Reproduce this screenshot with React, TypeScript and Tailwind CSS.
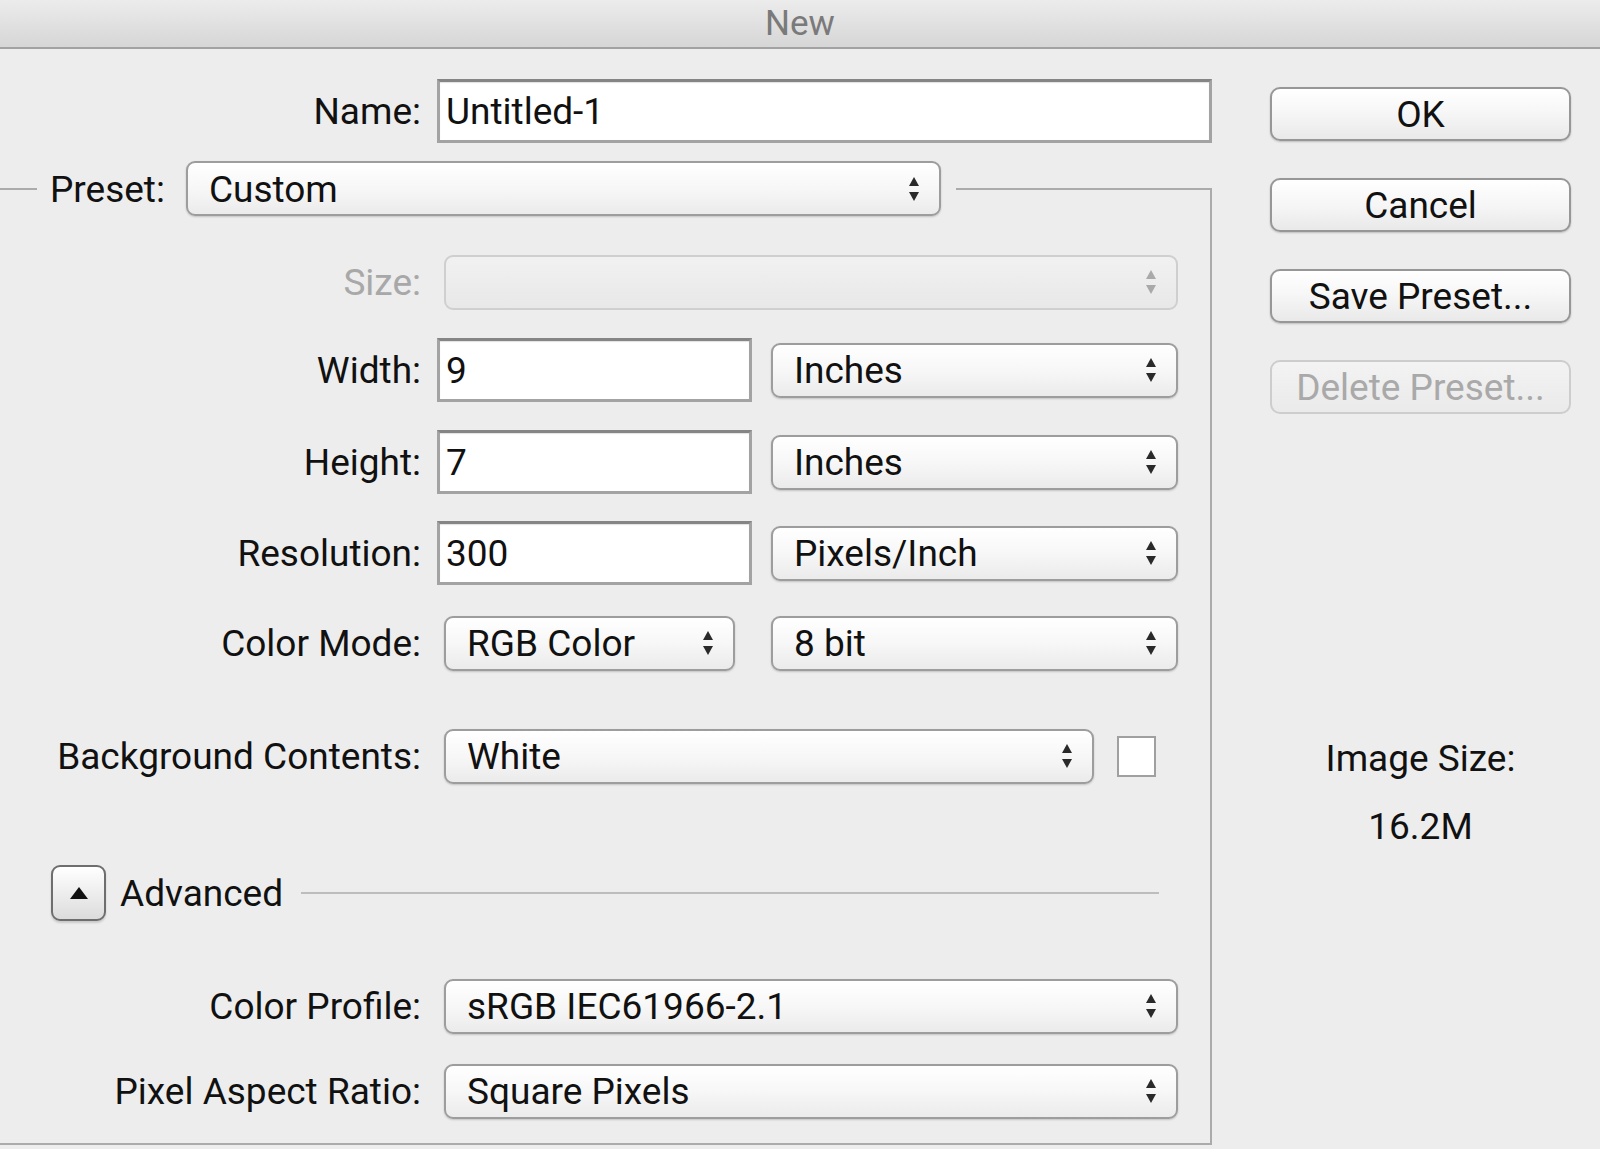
import type { ReactNode } from 'react';

const font = { fontFamily: 'Roboto, "Liberation Sans", sans-serif' };

function Arrows({ disabled = false }: { disabled?: boolean }) {
  const fill = disabled ? '#a9a9a9' : '#2a2a2a';
  return (
    <svg width="12" height="26" viewBox="0 0 12 26" className="shrink-0">
      <polygon points="6,1 11,10 1,10" fill={fill} />
      <polygon points="1,16 11,16 6,25" fill={fill} />
    </svg>
  );
}

function Popup({
  value,
  width,
  disabled = false,
}: {
  value?: string;
  width: string;
  disabled?: boolean;
}) {
  return (
    <div
      className={`${width} flex h-[55px] shrink-0 items-center justify-between rounded-[9px] border-[2px] pl-[21px] pr-[19px] ${
        disabled
          ? 'border-[#cfcfcf] bg-linear-to-b from-[#f1f1f1] to-[#e8e8e8]'
          : 'border-[#9d9d9d] bg-linear-to-b from-white via-[#f7f7f7] to-[#ebebeb] shadow-[0_1px_2px_rgba(0,0,0,0.18)]'
      }`}
    >
      <span className="whitespace-nowrap pt-[3px] text-[#111]">{value}</span>
      <Arrows disabled={disabled} />
    </div>
  );
}

function Field({ value, width }: { value: string; width: string }) {
  return (
    <div
      className={`${width} flex h-[64px] shrink-0 items-center border-[3px] border-[#a3a3a3] border-t-[#858585] bg-white pl-[6px] pt-[3px] text-[#111] shadow-[inset_0_1px_1px_rgba(0,0,0,0.12)]`}
    >
      {value}
    </div>
  );
}

function Row({
  label,
  disabled = false,
  className = '',
  children,
}: {
  label: string;
  disabled?: boolean;
  className?: string;
  children: ReactNode;
}) {
  return (
    <div className={`flex h-[64px] items-center ${className}`}>
      <span
        className={`w-[421px] shrink-0 pt-[3px] text-right ${disabled ? 'text-[#a8a8a8]' : 'text-[#111]'}`}
      >
        {label}
      </span>
      {children}
    </div>
  );
}

function DialogButton({ label, disabled = false }: { label: string; disabled?: boolean }) {
  return (
    <button
      type="button"
      disabled={disabled}
      className={`flex h-[54px] w-[301px] items-center justify-center rounded-[10px] border-[2px] pt-[2px] ${
        disabled
          ? 'border-[#cdcdcd] bg-linear-to-b from-[#f3f3f3] to-[#eaeaea] text-[#a9a9a9]'
          : 'border-[#979797] bg-linear-to-b from-white via-[#f6f6f6] to-[#e9e9e9] text-[#111] shadow-[0_1px_2px_rgba(0,0,0,0.2)]'
      }`}
    >
      {label}
    </button>
  );
}

export default function App() {
  return (
    <div
      className="flex h-[1149px] w-[1600px] flex-col overflow-hidden bg-[#ededed] text-[37px] leading-[1.2]"
      style={font}
    >
      <div className="flex h-[49px] shrink-0 items-center justify-center border-b-[2px] border-[#a2a2a2] bg-linear-to-b from-[#ececec] to-[#d6d6d6] text-[35px] text-[#7a7a7a]">
        New
      </div>

      <div className="flex flex-1">
        <div className="flex w-[1212px] shrink-0 flex-col">
          <div className="mt-[30px] flex h-[64px] items-center">
            <span className="w-[421px] shrink-0 pt-[3px] text-right text-[#111]">Name:</span>
            <div className="ml-[16px]">
              <Field value="Untitled-1" width="w-[775px]" />
            </div>
          </div>

          <fieldset className="mt-[18px] w-[1212px] border-t-[2px] border-r-[2px] border-b-[2px] border-[#ababab] pt-[34px] pb-[20px]">
            <legend className="ml-[37px] pl-[13px] pr-[15px]">
              <div className="flex items-center">
                <span className="pt-[3px] text-[#111]">Preset:</span>
                <div className="ml-[21px]">
                  <Popup value="Custom" width="w-[755px]" />
                </div>
              </div>
            </legend>

            <Row label="Size:" disabled>
              <div className="ml-[23px]">
                <Popup width="w-[734px]" disabled />
              </div>
            </Row>

            <Row label="Width:" className="mt-[24px]">
              <div className="ml-[16px]">
                <Field value="9" width="w-[315px]" />
              </div>
              <div className="ml-[19px]">
                <Popup value="Inches" width="w-[407px]" />
              </div>
            </Row>

            <Row label="Height:" className="mt-[28px]">
              <div className="ml-[16px]">
                <Field value="7" width="w-[315px]" />
              </div>
              <div className="ml-[19px]">
                <Popup value="Inches" width="w-[407px]" />
              </div>
            </Row>

            <Row label="Resolution:" className="mt-[27px]">
              <div className="ml-[16px]">
                <Field value="300" width="w-[315px]" />
              </div>
              <div className="ml-[19px]">
                <Popup value="Pixels/Inch" width="w-[407px]" />
              </div>
            </Row>

            <Row label="Color Mode:" className="mt-[26px]">
              <div className="ml-[23px]">
                <Popup value="RGB Color" width="w-[291px]" />
              </div>
              <div className="ml-[36px]">
                <Popup value="8 bit" width="w-[407px]" />
              </div>
            </Row>

            <Row label="Background Contents:" className="mt-[49px]">
              <div className="ml-[23px]">
                <Popup value="White" width="w-[650px]" />
              </div>
              <div className="ml-[23px] h-[41px] w-[39px] border-[2px] border-[#a0a0a0] bg-white" />
            </Row>

            <div className="mt-[73px] flex h-[64px] items-center">
              <button
                type="button"
                className="ml-[51px] flex h-[56px] w-[55px] items-center justify-center rounded-[9px] border-[2px] border-[#6e6e6e] bg-linear-to-b from-white to-[#dcdcdc] shadow-[0_2px_2px_rgba(0,0,0,0.15)]"
              >
                <svg width="18" height="12" viewBox="0 0 18 12">
                  <polygon points="9,0 18,12 0,12" fill="#111" />
                </svg>
              </button>
              <span className="ml-[14px] pt-[3px] text-[#111]">Advanced</span>
              <div className="mr-[51px] ml-[18px] h-[2px] flex-1 bg-[#bdbdbd]" />
            </div>

            <Row label="Color Profile:" className="mt-[49px]">
              <div className="ml-[23px]">
                <Popup value="sRGB IEC61966-2.1" width="w-[734px]" />
              </div>
            </Row>

            <Row label="Pixel Aspect Ratio:" className="mt-[21px]">
              <div className="ml-[23px]">
                <Popup value="Square Pixels" width="w-[734px]" />
              </div>
            </Row>
          </fieldset>
        </div>

        <div className="flex flex-col pt-[38px] pl-[58px]">
          <div className="flex flex-col gap-[37px]">
            <DialogButton label="OK" />
            <DialogButton label="Cancel" />
            <DialogButton label="Save Preset..." />
            <DialogButton label="Delete Preset..." disabled />
          </div>
          <div className="mt-[323px] flex w-[301px] flex-col items-center text-[#111]">
            <span>Image Size:</span>
            <span className="mt-[24px]">16.2M</span>
          </div>
        </div>
      </div>
    </div>
  );
}
